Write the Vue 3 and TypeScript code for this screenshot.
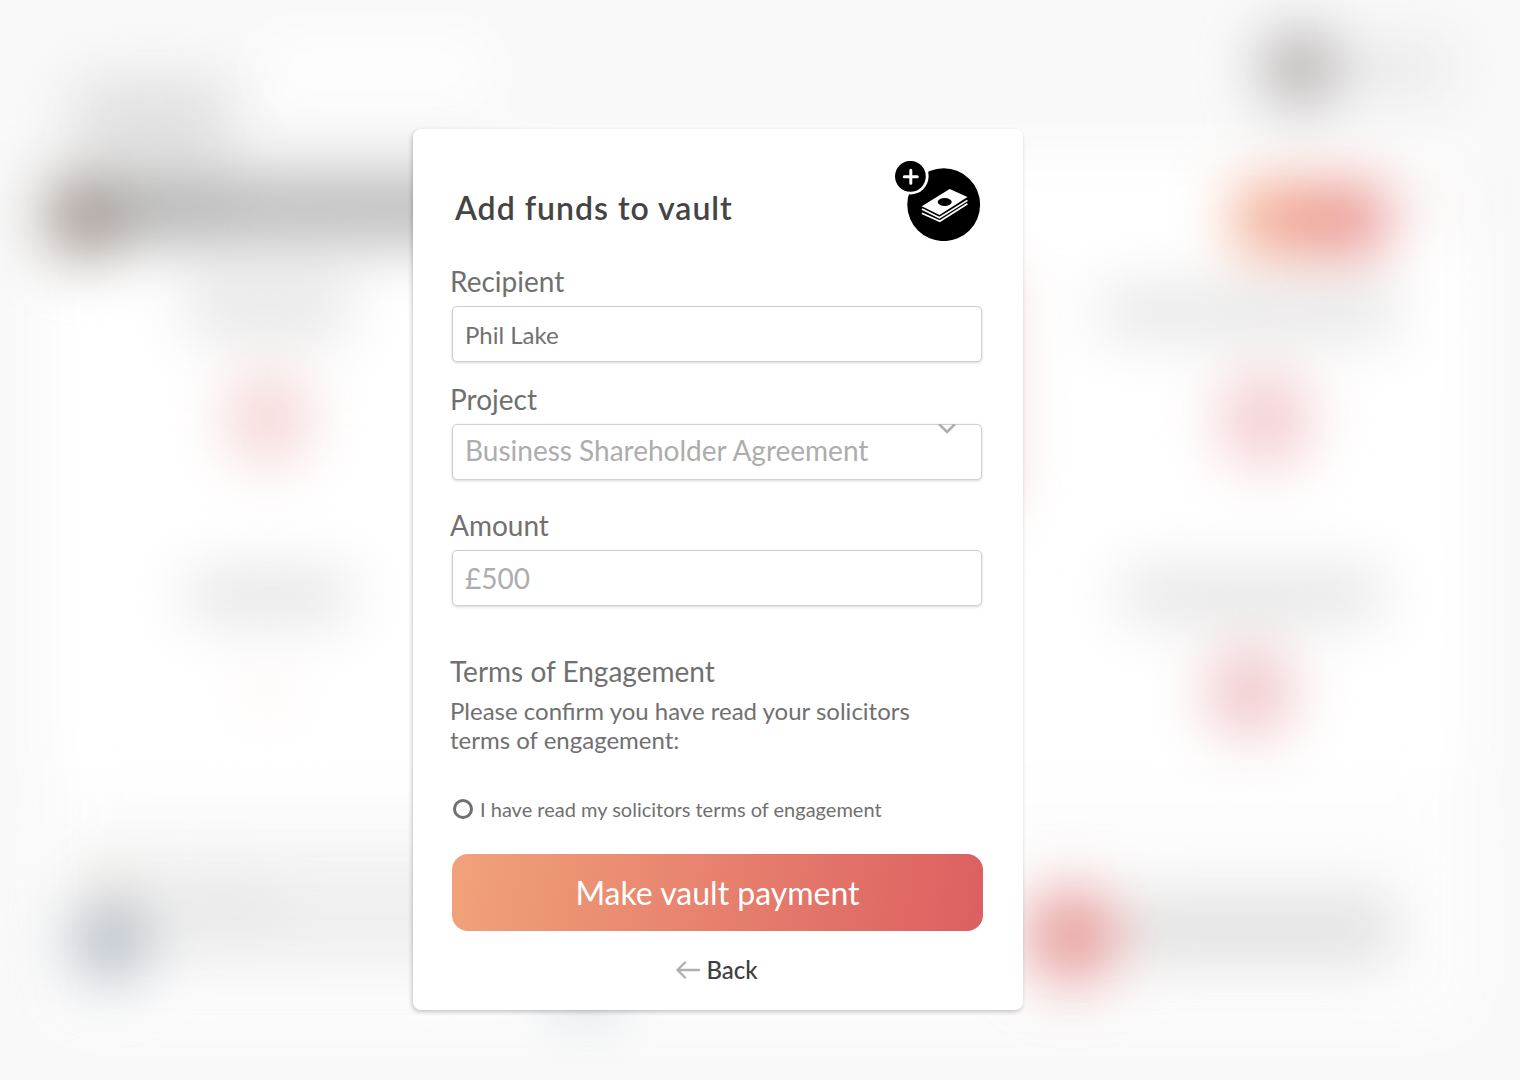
<script setup lang="ts">
import { ref } from 'vue'

interface Block {
  x: number
  y: number
  w: number
  h: number
  r: number
  fill: string
}

const project = ref('Business Shareholder Agreement')
const recipient = ref('Phil Lake')
const amount = ref('')
const agreed = ref(false)

const panels: Block[] = [
  { x: 260, y: 40, w: 230, h: 60, r: 20, fill: '#ffffff' },
  { x: 45, y: 155, w: 1430, h: 630, r: 20, fill: '#ffffff' },
  { x: 50, y: 785, w: 1420, h: 240, r: 20, fill: '#fdfdfd' },
]

const blocks: Block[] = [
  { x: 75, y: 82, w: 155, h: 70, r: 10, fill: '#dedede' },
  { x: 50, y: 170, w: 440, h: 76, r: 10, fill: '#bebebe' },
  { x: 130, y: 184, w: 100, h: 46, r: 10, fill: '#b1b3b2' },
  { x: 44, y: 180, w: 80, h: 80, r: 40, fill: '#a2968f' },
  { x: 185, y: 276, w: 165, h: 62, r: 10, fill: '#e7e7e7' },
  { x: 226, y: 370, w: 84, h: 96, r: 42, fill: '#f6d6d6' },
  { x: 188, y: 572, w: 162, h: 48, r: 10, fill: '#e3e3e3' },
  { x: 242, y: 666, w: 52, h: 52, r: 26, fill: '#fef7f5' },
  { x: 80, y: 845, w: 400, h: 90, r: 10, fill: '#f1f1f1' },
  { x: 85, y: 875, w: 50, h: 50, r: 20, fill: '#e9e3da' },
  { x: 70, y: 902, w: 80, h: 80, r: 40, fill: '#b4bcc6' },
  { x: 175, y: 890, w: 100, h: 66, r: 10, fill: '#e5e5e5' },
  { x: 150, y: 920, w: 330, h: 42, r: 10, fill: '#ececec' },
  { x: 548, y: 940, w: 74, h: 74, r: 37, fill: '#d0d8e2' },
  { x: 1262, y: 30, w: 76, h: 76, r: 38, fill: '#b1adac' },
  { x: 1345, y: 46, w: 105, h: 44, r: 10, fill: '#e6e6e6' },
  { x: 1400, y: 182, w: 80, h: 36, r: 10, fill: '#f7f3f2' },
  { x: 1102, y: 286, w: 296, h: 52, r: 10, fill: '#e6e6e6' },
  { x: 1218, y: 370, w: 94, h: 98, r: 46, fill: '#f4ced1' },
  { x: 1122, y: 570, w: 260, h: 50, r: 10, fill: '#e4e4e4' },
  { x: 1206, y: 646, w: 88, h: 92, r: 44, fill: '#f0c6c9' },
  { x: 940, y: 270, w: 66, h: 240, r: 10, fill: '#f5cccc' },
  { x: 1130, y: 894, w: 265, h: 70, r: 10, fill: '#e1e1e1' },
  { x: 1024, y: 888, w: 96, h: 96, r: 48, fill: '#e79c9c' },
]
</script>

<template>
  <div class="page">
    <svg class="backdrop" viewBox="0 0 1520 1080" preserveAspectRatio="xMidYMid slice" aria-hidden="true">
      <defs>
        <filter id="haze" filterUnits="userSpaceOnUse" x="-100" y="-100" width="1720" height="1280" color-interpolation-filters="sRGB">
          <feGaussianBlur stdDeviation="29" />
        </filter>
        <linearGradient id="cta">
          <stop offset="0" stop-color="#f4b08e" />
          <stop offset="1" stop-color="#e68a8d" />
        </linearGradient>
      </defs>
      <g filter="url(#haze)">
        <rect v-for="(b, i) in panels" :key="i" :x="b.x" :y="b.y" :width="b.w" :height="b.h" :rx="b.r" :fill="b.fill" />
      </g>
      <g filter="url(#haze)">
        <rect v-for="(b, i) in blocks" :key="i" :x="b.x" :y="b.y" :width="b.w" :height="b.h" :rx="b.r" :fill="b.fill" />
        <rect x="1234" y="184" width="152" height="70" rx="16" fill="url(#cta)" />
      </g>
    </svg>

    <main class="card">
      <header class="card-head">
        <h1>Add funds to vault</h1>
        <svg class="funds-icon" viewBox="0 0 86 80" aria-hidden="true">
          <circle cx="48.7" cy="43.7" r="36.4" fill="#000" />
          <circle cx="15.4" cy="15.3" r="18.2" fill="#fff" />
          <circle cx="15.4" cy="15.3" r="15.4" fill="#000" />
          <path d="M15.8 9.2v13M9.3 15.7h13" stroke="#fff" stroke-width="3" stroke-linecap="round" />
          <path d="M26.7 45.2 54.7 28 72.5 36 44.5 54z" fill="#fff" />
          <path d="M26.9 48 44.5 56.7 72.4 39.4M26.9 52.2 44.8 60.2 72.4 42.8" fill="none" stroke="#fff" stroke-width="1.7" />
          <ellipse cx="49.7" cy="41" rx="7" ry="4" fill="#000" />
        </svg>
      </header>

      <form @submit.prevent>
        <div class="field">
          <label for="recipient">Recipient</label>
          <input id="recipient" v-model="recipient" class="control control-name" type="text" />
        </div>

        <div class="field field-project">
          <label for="project">Project</label>
          <div class="select-wrap">
            <select id="project" v-model="project" class="control">
              <option>Business Shareholder Agreement</option>
            </select>
            <svg class="chevron" viewBox="0 0 18 10" aria-hidden="true">
              <path d="M1 0 9 8 17 0" fill="none" stroke="#aeaeae" stroke-width="2.6" />
            </svg>
          </div>
        </div>

        <div class="field field-amount">
          <label for="amount">Amount</label>
          <input id="amount" v-model="amount" class="control" type="text" placeholder="£500" />
        </div>

        <section class="terms">
          <h2>Terms of Engagement</h2>
          <p>Please confirm you have read your solicitors terms of engagement:</p>
          <div class="agree">
            <input id="agree" v-model="agreed" type="radio" name="agree" :value="true" />
            <label for="agree">I have read my solicitors terms of engagement</label>
          </div>
        </section>

        <button class="pay" type="submit">Make vault payment</button>
      </form>

      <a class="back" href="#">
        <svg viewBox="0 0 24 18" aria-hidden="true">
          <path d="M23 9H1.500M9 1.500 1.500 9 9 16.500" fill="none" stroke="#b0b0b0" stroke-width="2.400" stroke-linecap="round" stroke-linejoin="round" />
        </svg>
        <span>Back</span>
      </a>
    </main>
  </div>
</template>

<style>
body {
  margin: 0;
  background: #f9f9f9;
}
</style>

<style scoped>
.page {
  position: relative;
  display: flex;
  justify-content: center;
  box-sizing: border-box;
  min-height: 100vh;
  padding: 129px 84px 70px 0;
  overflow: hidden;
  background: #f9f9f9;
  color: #707070;
  font-family: Lato, 'Liberation Sans', sans-serif;
}

.backdrop {
  position: absolute;
  inset: 0;
  width: 100%;
  height: 100%;
}

.card {
  position: relative;
  box-sizing: border-box;
  width: 100%;
  max-width: 610px;
  padding: 32px 39px 26px 37px;
  border-radius: 8px;
  background: #fff;
  box-shadow: -1px 2px 4px rgba(0, 0, 0, 0.22);
}

.card-head {
  display: flex;
  align-items: center;
  justify-content: space-between;
  padding: 0 3px 0 5px;
}

h1 {
  margin: 0;
  padding-top: 14px;
  color: #444;
  font-size: 32px;
  font-weight: 600;
  line-height: 40px;
  letter-spacing: 1px;
}

.funds-icon {
  width: 86px;
  height: 80px;
}

.field {
  display: flex;
  flex-direction: column;
  gap: 8px;
  margin-top: 23px;
}

.field label,
h2 {
  margin: 0;
  font-size: 28px;
  font-weight: 400;
  line-height: 34px;
}

.field-project {
  margin-top: 20px;
}

.field-amount {
  margin-top: 28px;
}

.control {
  box-sizing: border-box;
  height: 56px;
  margin: 0 2px;
  padding: 0 12px;
  border: 1px solid #cfcfcf;
  border-radius: 5px;
  outline: none;
  background: #fff;
  box-shadow: 0 1px 3px rgba(0, 0, 0, 0.16);
  color: #adadad;
  font-family: inherit;
  font-size: 28px;
}

.control::placeholder {
  color: #adadad;
  opacity: 1;
}

.control-name {
  color: #707070;
  font-size: 24px;
}

.select-wrap {
  position: relative;
  display: flex;
}

select.control {
  flex: 1;
  padding-bottom: 4px;
  appearance: none;
}

.chevron {
  position: absolute;
  top: 0;
  right: 28px;
  width: 18px;
  height: 10px;
}

.terms {
  margin-top: 48px;
}

.terms p {
  max-width: 500px;
  margin: 8px 0 0;
  font-size: 24px;
  line-height: 29px;
}

.agree {
  display: flex;
  align-items: center;
  gap: 7px;
  margin-top: 43px;
  padding-left: 3px;
  font-size: 20px;
  line-height: 24px;
}

.agree input {
  width: 20px;
  height: 20px;
  margin: 0;
  border: 3px solid #707070;
  border-radius: 50%;
  appearance: none;
}

.agree input:checked {
  background: radial-gradient(#707070 40%, transparent 45%);
}

.pay {
  display: block;
  width: calc(100% - 3px);
  height: 77px;
  margin: 33px 1px 0 2px;
  border: 0;
  border-radius: 16px;
  background: linear-gradient(100deg, #f1a27a, #dc5f61);
  color: #fff;
  font-family: inherit;
  font-size: 32px;
}

.back {
  display: flex;
  align-items: center;
  justify-content: center;
  gap: 6px;
  margin-top: 24px;
  color: #404040;
  font-size: 24px;
  font-weight: 500;
  line-height: 29px;
  text-decoration: none;
}

.back svg {
  width: 24px;
  height: 18px;
}
</style>
